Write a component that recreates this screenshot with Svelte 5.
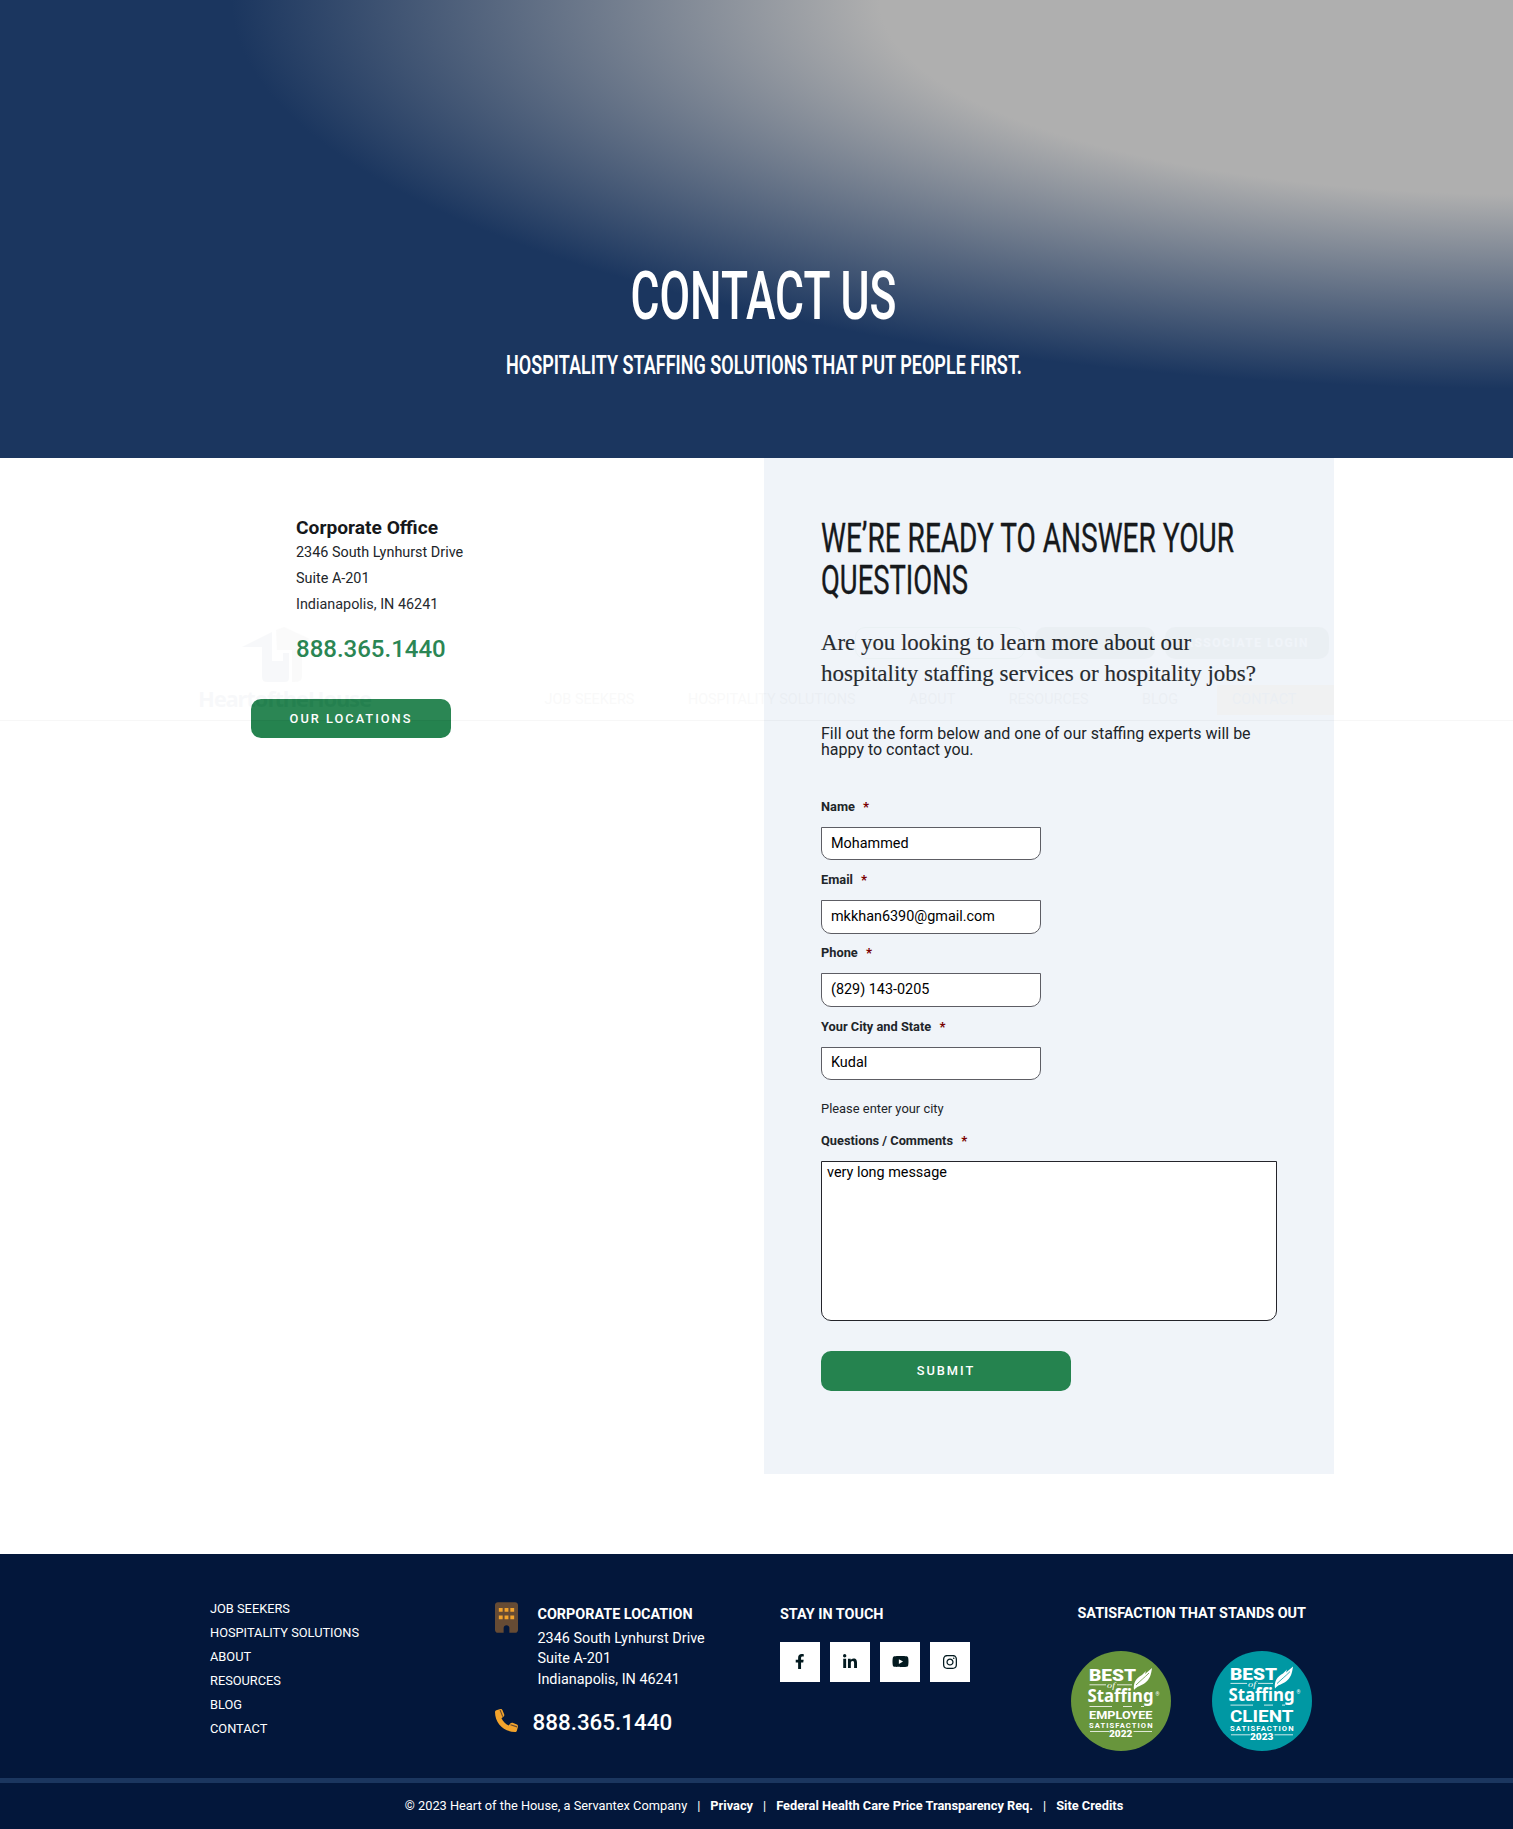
<script>
  const fields = [
    { label: 'Name', value: 'Mohammed', type: 'text' },
    { label: 'Email', value: 'mkkhan6390@gmail.com', type: 'email' },
    { label: 'Phone', value: '(829) 143-0205', type: 'tel' },
    { label: 'Your City and State', value: 'Kudal', type: 'text' }
  ];
  const links = ['JOB SEEKERS', 'HOSPITALITY SOLUTIONS', 'ABOUT', 'RESOURCES', 'BLOG', 'CONTACT'];
  const badges = [
    { kind: 'EMPLOYEE', year: '2022', tone: 'green', dy: 0, size: 11.7, kindY: 68.3, satY: 76.7, ruleY: 80.5, yearY: 86.3 },
    { kind: 'CLIENT', year: '2023', tone: 'teal', dy: -1.4, size: 17, kindY: 70.8, satY: 79.8, ruleY: 83.8, yearY: 89.3 }
  ];
</script>

<div class="viewport">
  <div class="page">
    <section class="hero">
      <h1>
        <svg width="274" height="64" viewBox="-4 0 274 64">
          <text x="-0.500" y="50.500" font-size="66" textLength="266" lengthAdjust="spacingAndGlyphs">CONTACT US</text>
        </svg>
      </h1>
      <p>
        <svg width="524" height="30" viewBox="-4 0 524 30">
          <text x="0" y="24" font-size="25.5" textLength="516" lengthAdjust="spacingAndGlyphs">HOSPITALITY STAFFING SOLUTIONS THAT PUT PEOPLE FIRST.</text>
        </svg>
      </p>
    </section>

    <main>
      <section class="office">
        <h3>Corporate Office</h3>
        <address>2346 South Lynhurst Drive<br />Suite A-201<br />Indianapolis, IN 46241</address>
        <a class="tel" href="#call">888.365.1440</a>
        <a class="btn locations" href="#locations">OUR LOCATIONS</a>
      </section>

      <section class="panel">
        <h2>
          <svg width="456" height="90" viewBox="0 0 456 90">
            <text x="0" y="38" font-size="40" textLength="413" lengthAdjust="spacingAndGlyphs">WE’RE READY TO ANSWER YOUR</text>
            <text x="0" y="80" font-size="40" textLength="147" lengthAdjust="spacingAndGlyphs">QUESTIONS</text>
          </svg>
        </h2>
        <p class="lead">
          <svg width="456" height="60" viewBox="0 0 456 60">
            <text x="0" y="22" font-size="23" textLength="370" lengthAdjust="spacingAndGlyphs">Are you looking to learn more about our</text>
            <text x="0" y="52.5" font-size="23" textLength="435" lengthAdjust="spacingAndGlyphs">hospitality staffing services or hospitality jobs?</text>
          </svg>
        </p>
        <p class="intro">Fill out the form below and one of our staffing experts will be happy to contact you.</p>

        <form>
          {#each fields as f}
            <label class="field">
              <span class="label">{f.label} <b>*</b></span>
              <input type={f.type} value={f.value} />
            </label>
          {/each}
          <p class="hint">Please enter your city</p>
          <label class="field">
            <span class="label">Questions / Comments <b>*</b></span>
            <textarea>very long message</textarea>
          </label>
          <button class="btn submit" type="button">SUBMIT</button>
        </form>
      </section>
    </main>

    <footer>
      <div class="cols">
        <nav class="links">
          {#each links as l}<a href="#top">{l}</a>{/each}
        </nav>

        <div class="contact">
          <div class="row">
            <svg class="building" width="23" height="31" viewBox="0 0 384 512">
              <path fill="#664b34" d="M48 0C21.500 0 0 21.500 0 48V464c0 26.500 21.500 48 48 48h96V432c0-26.500 21.500-48 48-48s48 21.500 48 48v80h96c26.500 0 48-21.500 48-48V48c0-26.500-21.500-48-48-48H48z" />
              <path fill="#f2a32c" d="M64 96h64v62H64zM160 96h64v62h-64zM256 96h64v62h-64zM64 224h64v62H64zM160 224h64v62h-64zM256 224h64v62h-64z" />
            </svg>
            <div>
              <h4>CORPORATE LOCATION</h4>
              <address>2346 South Lynhurst Drive<br />Suite A-201<br />Indianapolis, IN 46241</address>
            </div>
          </div>
          <div class="row phone">
            <svg width="23" height="23" viewBox="0 0 512 512">
              <path fill="#f2a32c" d="M164.900 24.600c-7.700-18.600-28-28.500-47.400-23.200l-88 24C12.100 30.200 0 46 0 64C0 311.400 200.600 512 448 512c18 0 33.800-12.100 38.600-29.500l24-88c5.300-19.400-4.600-39.700-23.200-47.400l-96-40c-16.300-6.800-35.200-2.100-46.300 11.600L304.700 368C234.300 334.700 177.300 277.700 144 207.300L193.300 167c13.700-11.200 18.400-30 11.600-46.300l-40-96z" />
              <path d="M112 20L172 170M345 350L492 398" fill="none" stroke="#664b34" stroke-width="24" />
            </svg>
            <a href="#call">888.365.1440</a>
          </div>
        </div>

        <div class="social">
          <h4>STAY IN TOUCH</h4>
          <div class="squares">
            <a href="#facebook" aria-label="Facebook">
              <svg width="9.500" height="15" viewBox="0 0 320 512"><path d="M279.140 288l14.220-92.660h-88.910v-60.130c0-25.350 12.420-50.060 52.240-50.060h40.420V6.260S260.430 0 225.360 0c-73.220 0-121.080 44.380-121.080 124.720v70.620H22.890V288h81.390v224h100.170V288z" /></svg>
            </a>
            <a href="#linkedin" aria-label="LinkedIn">
              <svg width="14" height="16" viewBox="0 0 448 512"><path d="M100.280 448H7.400V148.900h92.880zM53.790 108.100C24.090 108.100 0 83.500 0 53.800a53.790 53.790 0 0 1 107.580 0c0 29.700-24.100 54.300-53.790 54.300zM447.900 448h-92.680V302.400c0-34.700-.7-79.200-48.290-79.200-48.290 0-55.690 37.700-55.690 76.700V448h-92.780V148.900h89.080v40.800h1.300c12.400-23.500 42.690-48.300 87.880-48.300 94 0 111.280 61.900 111.280 142.300V448z" /></svg>
            </a>
            <a href="#youtube" aria-label="YouTube">
              <svg width="17" height="15" viewBox="0 0 576 512"><path d="M549.655 124.083c-6.281-23.650-24.787-42.276-48.284-48.597C458.781 64 288 64 288 64S117.220 64 74.629 75.486c-23.497 6.322-42.003 24.947-48.284 48.597-11.412 42.867-11.412 132.305-11.412 132.305s0 89.438 11.412 132.305c6.281 23.650 24.787 41.500 48.284 47.821C117.220 448 288 448 288 448s170.780 0 213.371-11.486c23.497-6.321 42.003-24.171 48.284-47.821 11.412-42.867 11.412-132.305 11.412-132.305s0-89.438-11.412-132.305zm-317.510 213.508V175.185l142.739 81.205-142.739 81.201z" /></svg>
            </a>
            <a href="#instagram" aria-label="Instagram">
              <svg width="14" height="16" viewBox="0 0 448 512"><path d="M224.100 141c-63.600 0-114.900 51.300-114.900 114.900s51.300 114.900 114.900 114.900S339 319.500 339 255.900 287.700 141 224.100 141zm0 189.600c-41.100 0-74.700-33.500-74.700-74.700s33.500-74.700 74.700-74.700 74.700 33.500 74.700 74.700-33.600 74.700-74.700 74.700zm146.400-194.300c0 14.900-12 26.800-26.800 26.800-14.900 0-26.800-12-26.800-26.800s12-26.800 26.800-26.800 26.800 12 26.800 26.800zm76.100 27.200c-1.700-35.900-9.900-67.700-36.200-93.900-26.200-26.200-58-34.400-93.900-36.200-37-2.100-147.900-2.100-184.900 0-35.800 1.700-67.600 9.900-93.900 36.100s-34.400 58-36.200 93.900c-2.100 37-2.100 147.900 0 184.900 1.700 35.900 9.900 67.700 36.200 93.900s58 34.400 93.900 36.200c37 2.100 147.900 2.100 184.900 0 35.900-1.700 67.700-9.900 93.900-36.200 26.200-26.200 34.400-58 36.200-93.900 2.100-37 2.100-147.800 0-184.800zM398.800 388c-7.800 19.600-22.900 34.700-42.600 42.600-29.500 11.700-99.500 9-132.100 9s-102.700 2.600-132.100-9c-19.600-7.800-34.700-22.900-42.600-42.600-11.700-29.500-9-99.500-9-132.100s-2.600-102.700 9-132.100c7.800-19.600 22.900-34.700 42.600-42.600 29.500-11.700 99.500-9 132.100-9s102.700-2.600 132.100 9c19.600 7.800 34.700 22.900 42.600 42.600 11.700 29.500 9 99.500 9 132.100s2.700 102.700-9 132.100z" /></svg>
            </a>
          </div>
        </div>

        <div class="awards">
          <h4>SATISFACTION THAT STANDS OUT</h4>
          <div class="badges">
            {#each badges as b}
              <svg class={b.tone} width="100" height="100" viewBox="0 0 100 100">
                <circle cx="50" cy="50" r="50" />
                <g transform="translate(0 {b.dy})">
                  <text class="heavy" x="18" y="30.300" font-size="17" textLength="47" lengthAdjust="spacingAndGlyphs">BEST</text>
                  <path class="rule" d="M18.500 33.800H35M46 33.800H61M18.500 55.500H41M52 55.500H61M70 55.500H73" />
                  <text class="of" x="36" y="37" font-size="9" textLength="8" lengthAdjust="spacingAndGlyphs">of</text>
                  <text class="staffing" x="16.500" y="51" font-size="17.500" textLength="66" lengthAdjust="spacingAndGlyphs">Staffing</text>
                  <text x="84.500" y="44.500" font-size="5">®</text>
                  <path class="leaf" d="M63 39C62 32 65 27 71 24L75 20L74 23L81 17C80 24 79 28 74 32C70 35 66 35 63 39Z" />
                  <path class="vein" d="M65 34C69 30 73 27 78 22" />
                </g>
                <text class="kind" x="18" y={b.kindY} font-size={b.size} textLength="63.500" lengthAdjust="spacingAndGlyphs">{b.kind}</text>
                <text class="kind" x="18" y={b.satY} font-size="7.600" textLength="63.500" lengthAdjust="spacing">SATISFACTION</text>
                <path class="rule" d="M19 {b.ruleY}H38M62.500 {b.ruleY}H81" />
                <text class="heavy" x="38" y={b.yearY} font-size="8.300" textLength="23.500" lengthAdjust="spacingAndGlyphs">{b.year}</text>
              </svg>
            {/each}
          </div>
        </div>
      </div>

      <div class="legal">
        <span>© 2023 Heart of the House, a Servantex Company</span><i>|</i><a href="#privacy">Privacy</a><i>|</i><a href="#federal">Federal Health Care Price Transparency Req.</a><i>|</i><a href="#credits">Site Credits</a>
      </div>
    </footer>

    <!-- Sticky header, almost fully faded out over the content -->
    <header class="ghost">
      <div class="bar">
        <div class="brand">
          <svg width="68" height="56" viewBox="0 0 68 56">
            <path fill="#1b365f" d="M0 20L30 5V34H41V26H47V51Q47 55 43 55H25Q20 55 20 50V20Z" />
            <path fill="#777" d="M34 3L42 0L68 12L60 15V50Q60 55 52 55H50V23H35Z" />
          </svg>
          <strong>HeartoftheHouse</strong>
        </div>
        <div class="menus">
          <div class="pills"><span class="outline"></span><span class="mid"></span><span class="login">ASSOCIATE LOGIN</span></div>
          <div class="nav">
            {#each links as l}<span>{l}</span>{/each}
          </div>
        </div>
      </div>
    </header>
  </div>
</div>

<style>
  :global(body) { margin: 0; background: #fff; }
  .viewport { width: 100%; height: 1829px; overflow: hidden; }
  .page { position: relative; width: 1528px; height: 1829px; font-family: Roboto, 'Liberation Sans', sans-serif; color: #212529; }
  h1, h2, h3, h4, p { margin: 0; }
  a { color: inherit; text-decoration: none; }
  address { font-style: normal; }
  svg { display: block; flex: none; overflow: visible; }
  .page :global(*) { box-sizing: border-box; }

  .hero {
    height: 458px; padding-top: 268px;
    display: flex; flex-direction: column; align-items: center;
    background: radial-gradient(at top right, #afafaf 30%, #1b365f 60%);
  }
  .hero text { fill: #fff; font-weight: 500; }
  .hero p text { font-weight: 600; }
  .hero p { margin-top: 18px; }

  main { width: 1140px; height: 1096px; margin: 0 auto; display: flex; align-items: flex-start; }
  .office { width: 570px; padding: 58px 0 0 102px; }
  .office h3 { font-size: 19.200px; line-height: 24px; font-weight: 700; color: #16181b; }
  .office address { font-size: 14.400px; line-height: 26px; }
  .tel { display: block; margin-top: 15px; font-size: 24px; line-height: 32px; font-weight: 500; color: #25834f; }
  .btn {
    display: flex; align-items: center; justify-content: center;
    border: 0; border-radius: 10px; background: #25834f; color: #fff;
    font: 500 12.800px Roboto, sans-serif; letter-spacing: 2px;
  }
  .locations { width: 200px; height: 39px; margin: 34px 0 0 -45px; }

  .panel { width: 570px; height: 1016px; padding: 56px 57px 0; background: #f0f4f9; }
  h2 { height: 90px; }
  h2 text { fill: #16191c; font-weight: 400; stroke: #16191c; stroke-width: 0.350; }
  .lead { margin-top: 24px; }
  .lead text { font-family: 'Liberation Serif', serif; fill: #212529; stroke: #212529; stroke-width: 0.150; }
  .intro { margin-top: 38px; font-size: 16px; line-height: 16px; }
  form { padding-top: 38.800px; }
  .field { display: block; height: 73.300px; }
  .label { display: block; font-size: 12.800px; line-height: 19px; font-weight: 700; }
  .label b { margin-left: 5px; color: #790000; }
  input {
    display: block; width: 220px; height: 33.600px; margin-top: 11px; padding: 0 9px 1px;
    border: 1px solid #5d5d64; border-radius: 0 0 10px 10px; background: #fff;
    font: 14.400px Roboto, sans-serif; color: #000;
  }
  .hint { margin-top: 9.100px; font-size: 12.900px; line-height: 19px; }
  .hint + .field { margin-top: 13px; height: 220px; }
  textarea {
    display: block; width: 456px; height: 160px; margin-top: 11px; padding: 2px 5px; resize: none; overflow: hidden;
    border: 1px solid #24242a; border-radius: 0 0 10px 10px; background: #fff;
    font: 14.400px/17px Roboto, sans-serif; color: #000;
  }
  .submit { width: 250px; height: 40px; padding-bottom: 2px; }

  footer { height: 275px; background: #03173b; color: #fff; }
  .cols { display: flex; height: 224px; padding-left: 210px; }
  .links { width: 284.500px; padding-top: 43px; display: flex; flex-direction: column; }
  .links a { font-size: 12.800px; line-height: 24px; }
  .contact { width: 285.500px; padding-top: 48px; }
  .row { display: flex; gap: 20px; }
  .row > div { padding-top: 1px; }
  h4 { font-size: 14.400px; line-height: 24px; font-weight: 700; white-space: nowrap; }
  .contact address { font-size: 14.400px; line-height: 20.400px; margin-top: 2px; }
  .phone { margin-top: 16.800px; gap: 15px; align-items: center; }
  .phone svg { margin-bottom: 3px; }
  .phone a { font-size: 22.400px; line-height: 30px; font-weight: 500; }
  .social { width: 291px; padding-top: 49px; }
  .squares { display: flex; gap: 10px; margin-top: 15px; }
  .squares a { width: 40px; height: 40px; padding-bottom: 1px; display: flex; align-items: center; justify-content: center; background: #fff; }
  .squares path { fill: #031a20; }
  .awards { padding-top: 48px; }
  .awards h4 { margin-left: 6.500px; }
  .badges { display: flex; gap: 41px; margin-top: 25px; }
  .green circle { fill: #68953c; }
  .teal circle { fill: #0098a3; }
  .green { color: #68953c; }
  .teal { color: #0098a3; }
  .badges text { fill: #fff; }
  .heavy { font-weight: 900; }
  .of { font-family: 'Liberation Serif', serif; font-style: italic; }
  .staffing { font-family: 'Noto Sans', sans-serif; font-weight: 700; }
  .kind { font-weight: 700; }
  .rule { fill: none; stroke: #fff; stroke-width: 0.8; }
  .leaf { fill: #fff; }
  .vein { fill: none; stroke: currentColor; stroke-width: 0.8; }

  .legal {
    height: 51px; padding-bottom: 1px; border-top: 5px solid #1b365f;
    display: flex; align-items: center; justify-content: center;
    font-size: 12.800px; white-space: nowrap;
  }
  .legal a { font-weight: 700; }
  .legal i { font-style: normal; margin: 0 10px; }

  .ghost {
    position: absolute; left: 0; top: 600px; width: 100%; height: 121px;
    background: #fff; border-bottom: 1px solid #000; opacity: 0.027; pointer-events: none;
  }
  .bar { width: 1140px; margin: 0 auto; display: flex; padding-top: 27px; }
  .brand { width: 354px; padding-left: 4px; }
  .brand svg { margin-left: 44px; }
  .brand strong { display: block; margin-top: 2px; font: 700 22px/27px 'Noto Sans', sans-serif; letter-spacing: -1.200px; color: #1b365f; }
  .menus { width: 786px; }
  .pills { display: flex; justify-content: flex-end; gap: 10px; height: 32px; padding-right: 5px; }
  .pills span { border-radius: 10px; background: #4b6b58; color: #fff; }
  .pills .outline { width: 170px; background: none; border: 1px solid #25834f; }
  .pills .mid { width: 120px; }
  .pills .login { width: 164px; font: 700 12px/32px Roboto, sans-serif; letter-spacing: 1.500px; text-align: center; }
  .nav {
    display: flex; justify-content: flex-end; gap: 53.500px; margin-top: 26px;
    font-size: 14.400px; line-height: 30px; color: #444; white-space: nowrap;
  }
  .nav span { flex: none; }
  .nav span:last-child { width: 117px; margin-left: -14.500px; padding-left: 15px; background: #f2a32c; }
</style>
